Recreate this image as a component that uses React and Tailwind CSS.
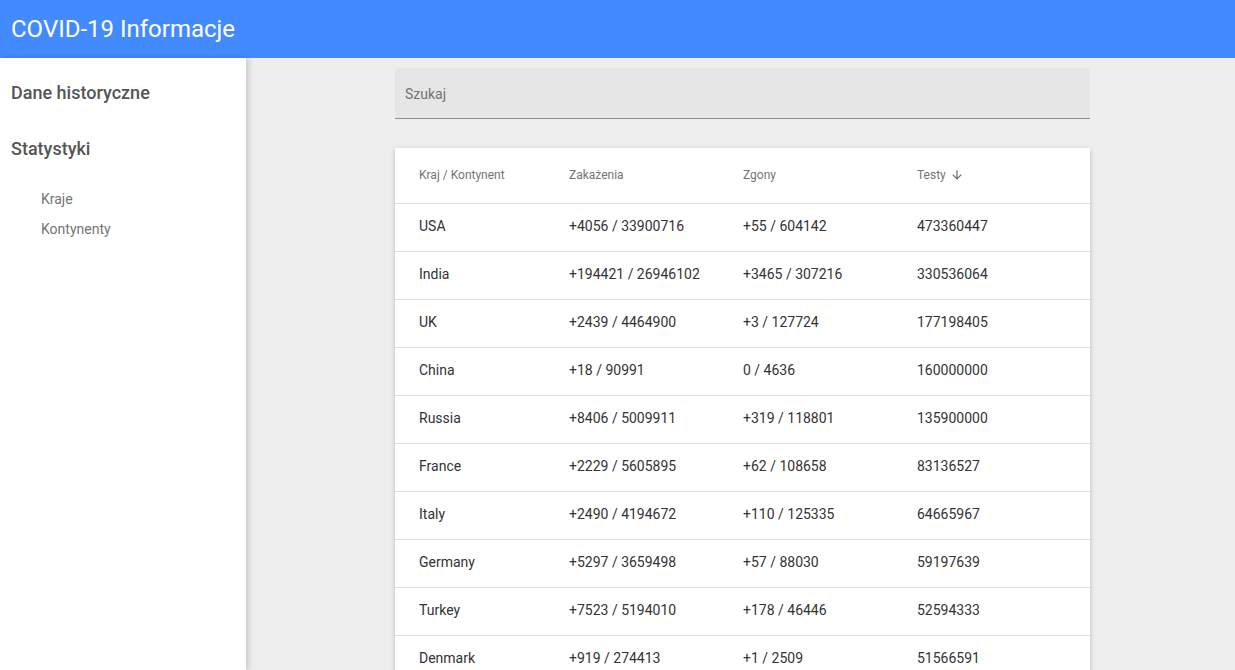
const rows = [
  ['USA', '+4056 / 33900716', '+55 / 604142', '473360447'],
  ['India', '+194421 / 26946102', '+3465 / 307216', '330536064'],
  ['UK', '+2439 / 4464900', '+3 / 127724', '177198405'],
  ['China', '+18 / 90991', '0 / 4636', '160000000'],
  ['Russia', '+8406 / 5009911', '+319 / 118801', '135900000'],
  ['France', '+2229 / 5605895', '+62 / 108658', '83136527'],
  ['Italy', '+2490 / 4194672', '+110 / 125335', '64665967'],
  ['Germany', '+5297 / 3659498', '+57 / 88030', '59197639'],
  ['Turkey', '+7523 / 5194010', '+178 / 46446', '52594333'],
  ['Denmark', '+919 / 274413', '+1 / 2509', '51566591'],
  ['Spain', '+3209 / 3636453', '+45 / 79801', '51000000'],
];

const cols = 'grid grid-cols-[150px_174px_174px_1fr] pl-6 items-center';

// material "arrow_downward"
const SortArrow = () => (
  <svg viewBox="0 0 24 24" className="w-[14px] h-[14px] fill-[#666666]">
    <path d="M20 12l-1.41-1.41L13 16.17V4h-2v12.17l-5.58-5.59L4 12l8 8 8-8z" />
  </svg>
);

export default function App() {
  return (
    <div className="h-[670px] flex flex-col overflow-hidden font-['Roboto',sans-serif] bg-[#eeeeee]">
      {/* Toolbar */}
      <header className="h-[58px] shrink-0 bg-[#448aff] flex items-center px-[11px]">
        <h1 className="text-white text-[24px] leading-none">COVID-19 Informacje</h1>
      </header>

      <div className="flex flex-1 min-h-0">
        {/* Sidenav */}
        <nav className="w-[246px] shrink-0 bg-white shadow-[2px_0_6px_rgba(0,0,0,0.18)] z-10 pt-[22px]">
          <div className="px-[11px] text-[18px] font-medium text-[#555555] leading-[26px]">Dane historyczne</div>
          <div className="px-[11px] mt-[30px] text-[18px] font-medium text-[#555555] leading-[26px]">Statystyki</div>
          <ul className="mt-[25px] pl-[41px] text-[14px] text-[#757575]">
            <li className="h-[30px] leading-[24px]">Kraje</li>
            <li className="h-[30px] leading-[24px]">Kontynenty</li>
          </ul>
        </nav>

        {/* Main */}
        <main className="flex-1 pt-[10px] pl-[149px]">
          <div className="w-[695px]">
            <div className="h-[51px] bg-[#e6e6e6] rounded-t-[4px] border-b border-[#8c8c8c] flex items-center px-[10px] pt-[2px] text-[14px] text-[#737373]">
              Szukaj
            </div>

            <div className="mt-[29px] bg-white shadow-[0_2px_4px_rgba(0,0,0,0.15),0_1px_8px_rgba(0,0,0,0.08)]">
              <div className={`${cols} h-[56px] pb-[2px] border-b border-[#e0e0e0] text-[12px] text-[#757575]`}>
                <div>Kraj / Kontynent</div>
                <div>Zakażenia</div>
                <div>Zgony</div>
                <div className="flex items-center gap-[4px]">
                  Testy
                  <SortArrow />
                </div>
              </div>
              {rows.map((r) => (
                <div key={r[0]} className={`${cols} h-[48px] pb-[2px] border-b border-[#e0e0e0] text-[14px] text-[#333333]`}>
                  {r.map((c, i) => (
                    <div key={i}>{c}</div>
                  ))}
                </div>
              ))}
            </div>
          </div>
        </main>
      </div>
    </div>
  );
}
